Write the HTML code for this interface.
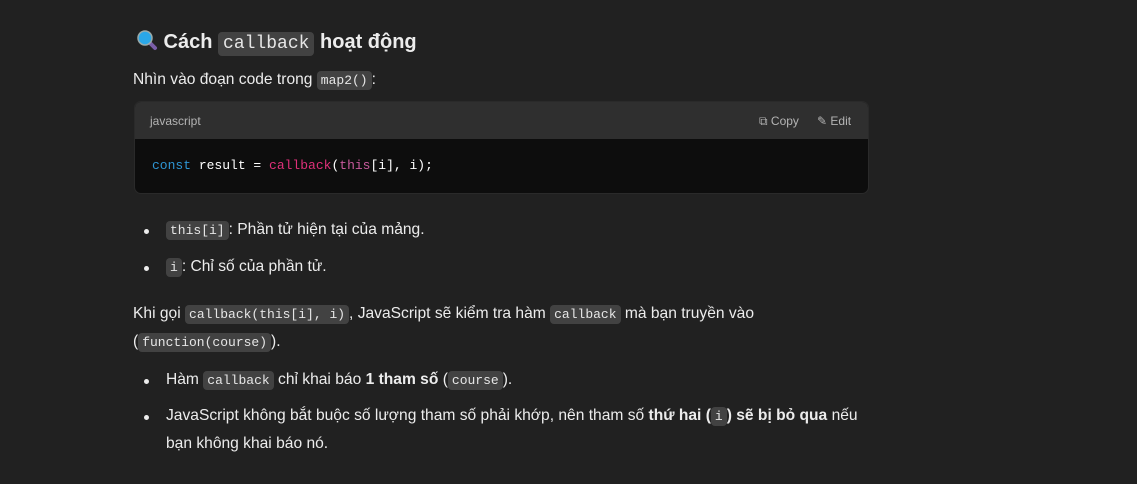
<!DOCTYPE html><html><head><meta charset="utf-8"><style>
body{margin:0;background:#212121;color:#ececec;font-family:"Liberation Sans","DejaVu Sans",sans-serif;font-size:15.6px;width:1137px;height:484px;overflow:hidden;position:relative}
.a{position:absolute;white-space:nowrap}
code{font-family:"Liberation Mono","DejaVu Sans Mono",monospace;font-size:13px;background:#424242;border-radius:4px;padding:2px 4px;color:#e6e6e6;font-weight:500}
.dot{position:absolute;left:144px;width:5px;height:5px;border-radius:50%;background:#ececec}
b{font-weight:700}
</style></head><body>
<div class="a" style="left:136px;top:28px;font-size:20px;font-weight:700;line-height:28px">
<svg width="22" height="22" viewBox="0 0 22 22" style="vertical-align:-3px"><line x1="13" y1="13" x2="19" y2="19" stroke="#7a5ea8" stroke-width="4" stroke-linecap="round"/><circle cx="9" cy="9" r="7" fill="#2aa7e8" stroke="#9aa" stroke-width="1.5"/></svg>
 Cách <code style="font-size:18px;font-weight:400;padding:2px 5px">callback</code> hoạt động</div>
<div class="a" style="left:133px;top:69px;line-height:22px">Nhìn vào đoạn code trong <code>map2()</code>:</div>
<div style="position:absolute;left:134px;top:101px;width:735px;height:93px;border-radius:7px;overflow:hidden;background:#0d0d0d;border:1px solid #2a2a2a;box-sizing:border-box">
<div style="height:37px;background:#2f2f2f;font-size:12px;color:#b4b4b4;position:relative">
<span class="a" style="left:15px;top:12px">javascript</span>
<span class="a" style="left:624px;top:12px">⧉ Copy</span>
<span class="a" style="left:682px;top:12px">✎ Edit</span></div>
<div class="a" style="left:17px;top:56px;font-family:'Liberation Mono','DejaVu Sans Mono',monospace;font-size:13px;color:#fff">
<span style="color:#2e95d3">const</span> result = <span style="color:#df3079">callback</span>(<span style="color:#c85a9c">this</span>[i], i);</div></div>
<div class="dot" style="top:229px"></div>
<div class="a" style="left:166px;top:219px;line-height:22px"><code>this[i]</code>: Phần tử hiện tại của mảng.</div>
<div class="dot" style="top:266px"></div>
<div class="a" style="left:166px;top:256px;line-height:22px"><code>i</code>: Chỉ số của phần tử.</div>
<div class="a" style="left:133px;top:303px;line-height:22px">Khi gọi <code>callback(this[i], i)</code>, JavaScript sẽ kiểm tra hàm <code>callback</code> mà bạn truyền vào</div>
<div class="a" style="left:133px;top:331px;line-height:22px">(<code>function(course)</code>).</div>
<div class="dot" style="top:379px"></div>
<div class="a" style="left:166px;top:369px;line-height:22px">Hàm <code>callback</code> chỉ khai báo <b>1 tham số</b> (<code>course</code>).</div>
<div class="dot" style="top:415px"></div>
<div class="a" style="left:166px;top:405px;line-height:22px">JavaScript không bắt buộc số lượng tham số phải khớp, nên tham số <b>thứ hai (<code>i</code>) sẽ bị bỏ qua</b> nếu</div>
<div class="a" style="left:166px;top:433px;line-height:22px">bạn không khai báo nó.</div>
</body></html>
